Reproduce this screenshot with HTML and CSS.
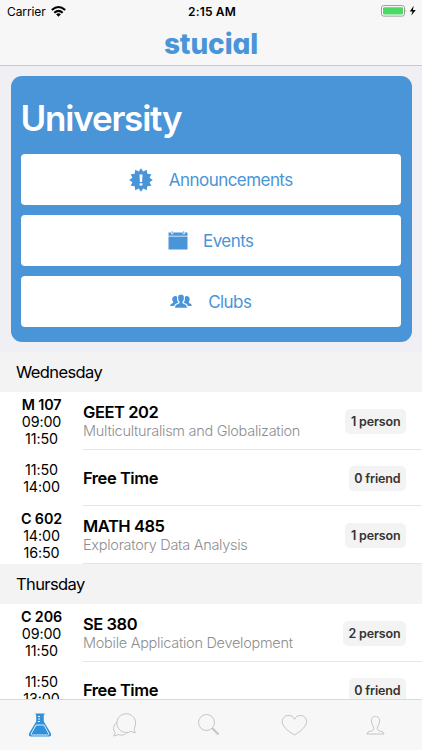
FILE: index.html
```html
<!DOCTYPE html>
<html lang="en">
<head>
<meta charset="utf-8">
<title>stucial</title>
<link rel="stylesheet" href="styles.css">
</head>
<body>
<div class="app">
  <header class="top">
    <div class="status">
      <div class="carrier"><span>Carrier</span>
        <svg width="15" height="11" viewBox="0 0 15 11"><g fill="none" stroke="#000" stroke-width="2"><path d="M.8 4.1Q7.5-2 14.2 4.1"/><path d="M3.3 6.7q4.2-3.7 8.4 0"/></g><path d="M5.1 8.3q2.4-2 4.8 0L7.5 10.8z"/></svg>
      </div>
      <div class="clock">2:15 AM</div>
      <div class="battery">
        <svg width="36" height="12" viewBox="0 0 36 12"><rect x=".5" y=".6" width="23" height="10.5" rx="2.2" fill="#fff" stroke="#999"/><rect x="2" y="2.2" width="20" height="7.3" rx="1" fill="#4cd964"/><path d="M24.7 4.2q1.3 1.7 0 3.4z" fill="#999"/><path d="M32.7.8 28.8 6.4h2.7l-1.2 4.2 4.5-5.7h-2.9z"/></svg>
      </div>
    </div>
    <div class="logo">stucial</div>
  </header>
  <main class="content">
    <section class="hero">
      <div class="card">
        <h1>University</h1>
        <div class="action announcements">
          <svg width="24" height="24" viewBox="-12 -12 24 24"><path fill="#4a94d8" d="M0-11.8 2.2-8.6 5.7-10.3 6.3-6.3 10.3-5.8 8.6-2.2 11.8 0 8.6 2.2 10.3 5.8 6.3 6.3 5.7 10.3 2.2 8.6 0 11.8-2.2 8.6-5.7 10.3-6.3 6.3-10.3 5.8-8.6 2.2-11.8 0-8.6-2.2-10.3-5.8-6.3-6.3-5.7-10.3-2.2-8.6z"/><path fill="#fff" d="M-1.5-5.5h3L1.1 2H-1.1zM-1.4 3.3h2.8v2.3h-2.8z"/></svg>
          <span>Announcements</span>
        </div>
        <div class="action events">
          <svg width="20" height="19" viewBox="0 0 20 19"><path fill="#4a94d8" d="M.5 1.5h2.7v1.8h2V1.5h9.6v1.8h2V1.5h2.7v3.3H.5zM.5 5.6h19V18.5H.5zM3.800.3h.9v2.3h-.9zM15.300.3h.9v2.3h-.9z"/></svg>
          <span>Events</span>
        </div>
        <div class="action clubs">
          <svg width="22" height="15" viewBox="0 0 22 15"><g fill="#4a94d8"><path d="M4.500 2.200c1.200-.4 2.200 0 2.600.8-.2 2.700.1 4 1.300 5.500L5 10.200 4.200 12H.3c0-2.200.9-2.300 2.800-3V7.600C1.800 5.800 2 2.800 4.500 2.200zM17.500 2.200c-1.200-.4-2.200 0-2.600.8.2 2.700-.1 4-1.300 5.500L17 10.200l.8 1.800h3.900c0-2.200-.9-2.300-2.800-3V7.600c1.300-1.800 1.100-4.800-1.400-5.400z"/><path stroke="#fff" stroke-width=".5" d="M11 .4c2.500 0 3.500 1.500 3.100 4.300-.2 1.600-.8 2.100-1.300 3v1.500c2.500 1 4.300 1.300 4.500 4.800H4.700c.2-3.500 2-3.800 4.500-4.800V7.700c-.5-.9-1.100-1.400-1.300-3C7.500 1.900 8.500.4 11 .4z"/></g></svg>
          <span>Clubs</span>
        </div>
      </div>
    </section>
    <h2>Wednesday</h2>
    <div class="row">
      <div class="time"><b>M 107</b><span>09:00</span><span>11:50</span></div>
      <div class="detail"><div class="course"><strong>GEET 202</strong><small>Multiculturalism and Globalization</small></div><span class="badge">1 person</span></div>
    </div>
    <div class="row short">
      <div class="time"><span>11:50</span><span>14:00</span></div>
      <div class="detail"><div class="course"><strong>Free Time</strong></div><span class="badge">0 friend</span></div>
    </div>
    <div class="row">
      <div class="time"><b>C 602</b><span>14:00</span><span>16:50</span></div>
      <div class="detail"><div class="course"><strong>MATH 485</strong><small>Exploratory Data Analysis</small></div><span class="badge">1 person</span></div>
    </div>
    <h2>Thursday</h2>
    <div class="row">
      <div class="time"><b>C 206</b><span>09:00</span><span>11:50</span></div>
      <div class="detail"><div class="course"><strong>SE 380</strong><small>Mobile Application Development</small></div><span class="badge">2 person</span></div>
    </div>
    <div class="row short">
      <div class="time"><span>11:50</span><span>13:00</span></div>
      <div class="detail"><div class="course"><strong>Free Time</strong></div><span class="badge">0 friend</span></div>
    </div>
  </main>
  <nav class="tabs">
    <svg width="24" height="26" viewBox="0 0 24 26"><path d="M7.500 1.500h9v1.300h-.7V9.500l6.800 11.300c1.300 2.500.3 3.700-1.600 3.700H3c-1.900 0-2.900-1.200-1.600-3.700L8.200 9.500V2.800h-.7z" fill="#2f91dc"/><path d="M8 13h8l4.400 8c.8 1.500.3 2-.8 2H4.400c-1.100 0-1.600-.5-.8-2z" fill="none" stroke="#f7f7f7" stroke-width=".9"/><path d="M10 4.500h2M10 7h2M10 9.500h2" stroke="#f7f7f7"/></svg>
    <svg width="26" height="26" viewBox="0 0 26 26" class="line"><path d="M24.500 20.500c-1.900 0-3.500-.4-4.600-1.200A9.400 9.400 0 1 1 23.300 16c-.2 1.700.2 3.200 1.200 4.500z"/><path d="M5.800 10.500c-3.900 3-4 7.200-1.800 9.800.2 1.300-.3 2.500-1.500 3.500 2 .1 3.400-.4 4.500-1.300 3.700 1.400 7.700.2 9.500-2.300"/></svg>
    <svg width="24" height="24" viewBox="0 0 24 24" class="line"><circle cx="9.500" cy="9.500" r="8"/><path d="m15.300 15.300 6.200 6.200" stroke-width="2"/></svg>
    <svg width="27" height="23" viewBox="-1 0 27 23" class="line"><path d="M13.500 21C6 16.500 1.200 12 1.200 7.500c0-6.700 9.500-8.500 12.300-2.200C16.300-1 25.500.8 25.500 7.500 25.500 12 21 16.500 13.500 21z"/></svg>
    <svg width="19" height="21" viewBox="0 0 19 21" class="line"><path d="M9.500 1.500c3.500 0 4.500 2.500 4 5.500-.3 2-1.500 3.700-2 5-.7 2.600.3 3.600 3 4.300 2.300.6 3.500 1 3.500 2.700H1c0-1.700 1.200-2.100 3.500-2.700 2.700-.7 3.700-1.700 3-4.300-.5-1.300-1.700-3-2-5-.5-3 .5-5.500 4-5.500z"/></svg>
  </nav>
</div>
</body>
</html>
```
FILE: styles.css
```css
* { box-sizing: border-box; }
body { margin: 0; background: #fff; font-family: Inter, "Liberation Sans", sans-serif; color: #000; }
svg { display: block; flex: none; }
.app { width: 422px; height: 750px; display: flex; flex-direction: column; overflow: hidden; }
.top { height: 66px; flex: none; background: #f7f7f7; border-bottom: 1px solid #c9c9cf; }
.status { height: 22px; padding: 0 5px 0 7px; display: grid; grid-template-columns: 1fr auto 1fr; align-items: center; font-size: 12px; }
.carrier { display: flex; align-items: center; gap: 5px; letter-spacing: -.1px; }
.clock { font-weight: 600; letter-spacing: .15px; }
.battery { justify-self: end; }
.logo { text-align: center; color: #4a94d8; font-size: 28px; font-weight: 800; line-height: 44px; letter-spacing: -.1px; font-feature-settings: "cv11"; }
.content { flex: 1; min-height: 0; overflow: hidden; }
.hero { height: 286px; padding: 10px 10.5px; background: #efeff4; }
.card { height: 266px; border-radius: 11px; background: #4a94d8; padding: 19px 10.5px 15px 10px; display: flex; flex-direction: column; gap: 10px; }
h1 { margin: 0; height: 49px; line-height: 46px; color: #fff; font-size: 35px; font-weight: 600; letter-spacing: -1.2px; }
.action { height: 51px; flex: none; background: #fff; border-radius: 4px; display: flex; align-items: center; justify-content: center; color: #4a94d8; font-size: 17px; letter-spacing: -.55px; }
.announcements { gap: 16px; }
.events { gap: 15px; }
.clubs { gap: 16px; }
h2 { margin: 0; height: 40px; padding-left: 16px; background: #f3f3f3; font-size: 16.5px; line-height: 41px; font-weight: 400; letter-spacing: -.6px; }
.row { height: 58px; display: flex; }
.row.short { height: 56px; }
.time { width: 83px; padding-top: 1px; display: flex; flex-direction: column; align-items: center; justify-content: center; font-size: 14.3px; line-height: 17.3px; letter-spacing: -.1px; }
.short .time { padding-top: 0; }
.time b { font-weight: 600; }
.detail { flex: 1; display: flex; align-items: center; justify-content: space-between; padding: 2px 16px 0 0; border-bottom: 1px solid #e6e6e8; }
.course { display: flex; flex-direction: column; padding-bottom: 2px; }
.course strong { font-size: 16.5px; line-height: 20px; font-weight: 600; letter-spacing: -.45px; }
.course small { font-size: 14.5px; line-height: 17px; color: #8e8e8e; font-weight: 300; letter-spacing: -.28px; }
.badge { height: 25px; padding: 0 5.5px; border-radius: 5px; background: #f3f3f3; color: #333; font-size: 12.5px; line-height: 25px; font-weight: 600; letter-spacing: -.15px; }
.tabs { height: 51px; flex: none; background: #f7f7f7; border-top: 1px solid #d9d9d9; padding: 0 37px 0 28px; display: flex; align-items: center; justify-content: space-between; }
.line { fill: none; stroke: #c4c4c4; stroke-width: 1; stroke-linejoin: round; }
```
